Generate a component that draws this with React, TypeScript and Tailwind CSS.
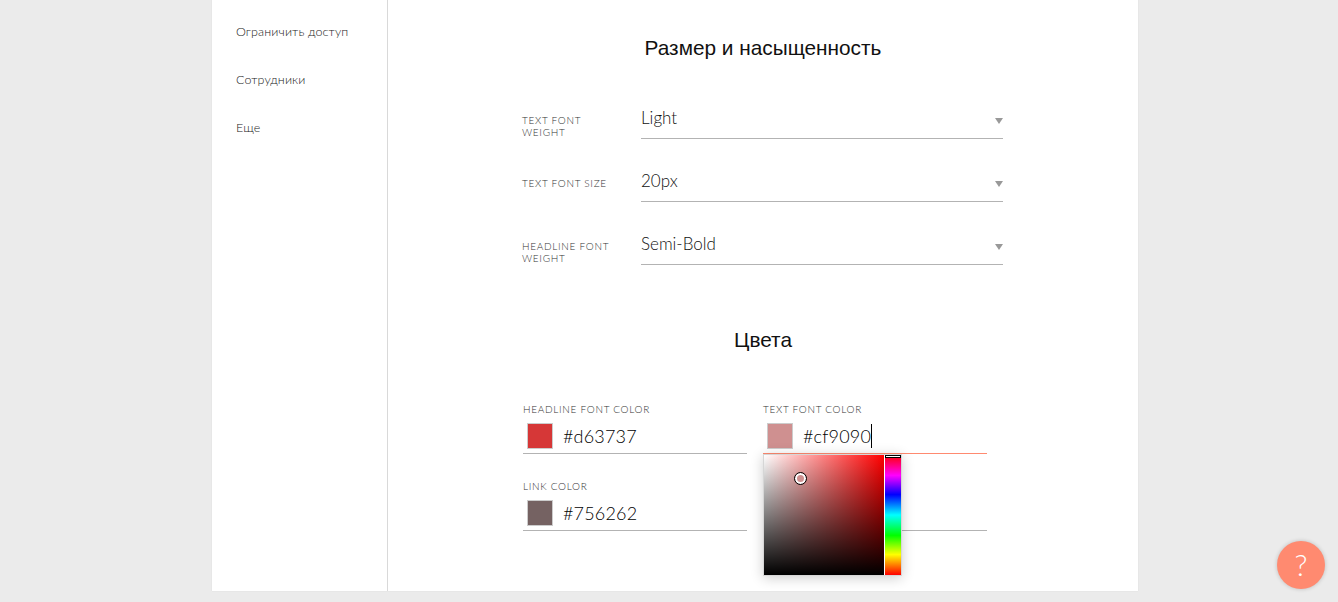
const sidebarItems = ["Ограничить доступ", "Сотрудники", "Еще"];

const selectRows = [
  { label: "Text font weight", value: "Light" },
  { label: "Text font size", value: "20px" },
  { label: "Headline font weight", value: "Semi-Bold" },
];

function SelectRow({ label, value }: { label: string; value: string }) {
  return (
    <div className="flex h-[63px] items-end">
      <div className="h-[50px] w-[119px] shrink-0 pt-[25px] pr-6 text-[10px] leading-[12px] font-light tracking-[0.07em] text-[#333] uppercase">
        {label}
      </div>
      <div className="flex h-[50px] flex-1 items-start justify-between border-b border-[#b3b3b3]">
        <span className="pt-[17px] text-[17px] leading-6 font-light text-[#111]">{value}</span>
        <span className="mt-[29px] h-0 w-0 border-x-[4px] border-t-[6px] border-x-transparent border-t-[#999]" />
      </div>
    </div>
  );
}

function ColorField({
  label,
  color,
  focused,
  children,
}: {
  label: string;
  color: string;
  focused?: boolean;
  children?: React.ReactNode;
}) {
  return (
    <div className="relative w-[224px]">
      <div className="h-[21px] text-[10px] leading-[14px] font-light tracking-[0.07em] text-[#333] uppercase">{label}</div>
      <div className={`flex h-[31px] items-start border-b pl-1 ${focused ? "border-[#ff8a70]" : "border-[#b3b3b3]"}`}>
        <span className="h-[26px] w-[26px] shrink-0 border border-[#ccc]" style={{ backgroundColor: color }} />
        {children}
      </div>
    </div>
  );
}

function HexValue({ value, caret }: { value: string; caret?: boolean }) {
  return (
    <span className="ml-[10px] flex h-[26px] items-center text-[18px] leading-[26px] font-light tracking-[0.01em] text-black">
      {value}
      {caret && <span className="h-[24px] w-px bg-black" />}
    </span>
  );
}

function ColorPicker() {
  return (
    <div className="absolute top-[52px] left-0 z-10 flex h-[122px] w-[139px] border border-[#d6d6d6] bg-white shadow-[0_2px_12px_rgba(0,0,0,0.2)]">
      <div className="relative h-[120px] w-[120px] bg-[linear-gradient(to_top,#000,transparent),linear-gradient(to_right,#fff,#f00)]">
        <span className="absolute top-[18px] left-[31px] h-[11px] w-[11px] rounded-full border-2 border-white bg-[#cf9090] outline outline-black" />
      </div>
      <div className="relative ml-px h-[120px] w-[16px] bg-[linear-gradient(to_bottom,#f00,#f0f_17%,#00f_33%,#0ff_50%,#0f0_67%,#ff0_83%,#f00)]">
        <span className="absolute top-0 left-0 h-[3px] w-full border border-black bg-white" />
      </div>
    </div>
  );
}

export default function App() {
  return (
    <div className="relative flex h-[602px] w-full justify-center overflow-hidden bg-[#ebebeb] pl-3 font-['Lato','Liberation_Sans',sans-serif]">
      <div className="flex h-[591px] w-[926px] bg-white shadow-[0_0_1px_rgba(0,0,0,0.1)]">
        <aside className="w-[176px] shrink-0 border-r border-[#d9d9d9] pt-[8px] pl-6">
          {sidebarItems.map((item) => (
            <div key={item} className="flex h-12 items-center text-[12.5px] font-light tracking-[0.01em] text-[#222]">
              {item}
            </div>
          ))}
        </aside>

        <main className="flex-1">
          <h2 className="pt-[36px] text-center font-['Liberation_Sans',sans-serif] text-[20.8px] leading-6 text-[#111]">
            Размер и насыщенность
          </h2>

          <div className="mt-[16px] ml-[134px] w-[481px]">
            {selectRows.map((row) => (
              <SelectRow key={row.label} {...row} />
            ))}
          </div>

          <h2 className="pt-[63px] text-center font-['Liberation_Sans',sans-serif] text-[20.8px] leading-6 text-[#111]">
            Цвета
          </h2>

          <div className="mt-[50px] ml-[135px] grid w-[464px] grid-cols-[224px_224px] gap-x-4 gap-y-[25px]">
            <ColorField label="Headline font color" color="#d63737">
              <HexValue value="#d63737" />
            </ColorField>
            <div className="relative">
              <ColorField label="Text font color" color="#cf9090" focused>
                <HexValue value="#cf9090" caret />
              </ColorField>
              <ColorPicker />
            </div>
            <ColorField label="Link color" color="#756262">
              <HexValue value="#756262" />
            </ColorField>
            <div className="h-[52px] border-b border-[#b3b3b3]" />
          </div>
        </main>
      </div>

      <button
        type="button"
        className="absolute right-[13px] bottom-[13px] flex h-12 w-12 items-center justify-center rounded-full bg-[#ff8a70] pb-0.5 text-[30px] font-light text-white shadow-[0_0_4px_rgba(0,0,0,0.2)]"
      >
        ?
      </button>
    </div>
  );
}
